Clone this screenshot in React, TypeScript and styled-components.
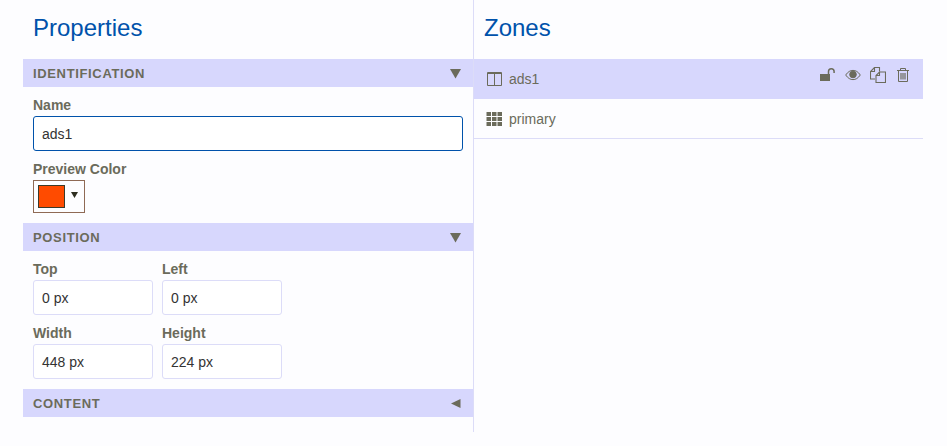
import * as React from 'react'
import styled, { createGlobalStyle } from 'styled-components'

const ink = '#6b6b5b'
const band = '#d7d7fd'
const line = '#dcdcf8'
const paper = '#fdfdff'

const GlobalStyle = createGlobalStyle`
    html, body {
        margin: 0;
        padding: 0;
        background: ${paper};
    }
    body {
        font-family: "Liberation Sans", Arial, sans-serif;
        font-size: 14px;
    }
`

const Page = styled.div`
    display: flex;
    width: 947px;
    height: 446px;
    padding-left: 23px;
    box-sizing: border-box;
    align-items: flex-start;
    overflow: hidden;
`

const PropertiesPanel = styled.section`
    width: 451px;
    height: 432px;
    box-sizing: border-box;
    border-right: 1px solid ${line};
`

const ZonesPanel = styled.section`
    width: 449px;
`

const Title = styled.h1`
    margin: 0;
    height: 59px;
    padding: 14px 0 0 10px;
    box-sizing: border-box;
    font-size: 24px;
    line-height: 28px;
    font-weight: 400;
    color: #0052ab;
`

const SectionBar = styled.div`
    display: flex;
    align-items: center;
    justify-content: space-between;
    height: 28px;
    padding: 0 12px 0 10px;
    background: ${band};
    color: ${ink};
    font-size: 13px;
    font-weight: 700;
    letter-spacing: 0.65px;
    text-transform: uppercase;
`

const SectionBody = styled.div`
    padding: 10px 10px 10px;
`

const Field = styled.div`
    display: flex;
    flex-direction: column;
    margin-bottom: 10px;

    &:last-child {
        margin-bottom: 0;
    }
`

const Label = styled.label`
    height: 19px;
    line-height: 17px;
    font-size: 14px;
    font-weight: 700;
    color: ${ink};
`

const TextInput = styled.div<{ $focused?: boolean; $small?: boolean }>`
    display: flex;
    align-items: center;
    width: ${({ $small }) => ($small ? '120px' : '430px')};
    height: 35px;
    padding-left: 8px;
    box-sizing: border-box;
    background: #fff;
    border: 1px solid ${({ $focused }) => ($focused ? '#0052ab' : line)};
    border-radius: 3px;
    font-size: 14px;
    color: #333;
`

const FieldRow = styled.div`
    display: flex;
    gap: 9px;
    margin-bottom: 10px;

    &:last-child {
        margin-bottom: 0;
    }

    ${Field} {
        margin-bottom: 0;
    }
`

const ColorPicker = styled.div`
    display: flex;
    align-items: center;
    gap: 6px;
    width: 52px;
    height: 33px;
    padding-left: 4px;
    box-sizing: border-box;
    border: 1px solid #8f6a55;
`

const ColorSwatch = styled.span`
    display: block;
    width: 27px;
    height: 23px;
    box-sizing: border-box;
    background: #ff4b00;
    border: 1px solid #3a3a2a;
`

const PickerArrow = styled.svg`
    width: 7px;
    height: 7px;
    margin-top: -4px;
    fill: #2e2e20;
`

const ZoneRow = styled.div<{ $active?: boolean }>`
    display: flex;
    align-items: center;
    height: 40px;
    padding: 0 12px 0 12px;
    box-sizing: border-box;
    background: ${({ $active }) => ($active ? band : 'transparent')};
    border-bottom: ${({ $active }) => ($active ? 'none' : `1px solid ${line}`)};
    color: ${ink};
    font-size: 14px;
`

const ZoneIcon = styled.svg`
    width: 16px;
    height: 14px;
    margin-right: 7px;
    flex: none;
`

const ZoneActions = styled.div`
    display: flex;
    align-items: center;
    gap: 9px;
    margin-left: auto;
    margin-bottom: 8px;
`

const ActionIcon = styled.svg`
    display: block;
    width: 16px;
    height: 16px;
`

const Caret: React.FC<{ open?: boolean }> = ({ open }) => (
    <svg width="11" height="11" viewBox="0 0 11 11" fill={ink}>
        {open ? <path d="M0 1h11L5.500 10.500z" /> : <path d="M1 5.500 10.500 1v9z" />}
    </svg>
)

const App: React.FC = () => {
    return (
        <>
            <GlobalStyle />
            <Page>
                <PropertiesPanel>
                    <Title>Properties</Title>
                    <SectionBar>
                        Identification
                        <Caret open />
                    </SectionBar>
                    <SectionBody>
                        <Field>
                            <Label>Name</Label>
                            <TextInput $focused>ads1</TextInput>
                        </Field>
                        <Field>
                            <Label>Preview Color</Label>
                            <ColorPicker>
                                <ColorSwatch />
                                <PickerArrow viewBox="0 0 8 8">
                                    <path d="M0 1h8L4 8z" />
                                </PickerArrow>
                            </ColorPicker>
                        </Field>
                    </SectionBody>
                    <SectionBar>
                        Position
                        <Caret open />
                    </SectionBar>
                    <SectionBody>
                        <FieldRow>
                            <Field>
                                <Label>Top</Label>
                                <TextInput $small>0 px</TextInput>
                            </Field>
                            <Field>
                                <Label>Left</Label>
                                <TextInput $small>0 px</TextInput>
                            </Field>
                        </FieldRow>
                        <FieldRow>
                            <Field>
                                <Label>Width</Label>
                                <TextInput $small>448 px</TextInput>
                            </Field>
                            <Field>
                                <Label>Height</Label>
                                <TextInput $small>224 px</TextInput>
                            </Field>
                        </FieldRow>
                    </SectionBody>
                    <SectionBar>
                        Content
                        <Caret />
                    </SectionBar>
                </PropertiesPanel>
                <ZonesPanel>
                    <Title>Zones</Title>
                    <ZoneRow $active>
                        <ZoneIcon viewBox="0 0 16 14" fill="none" stroke={ink}>
                            <path d="M1.500.500h14v13h-14zM8.500.500v13" />
                            <path d="M1.500 1.500h14" />
                        </ZoneIcon>
                        ads1
                        <ZoneActions>
                            <ActionIcon viewBox="0 0 16 16" fill={ink}>
                                <path d="M0 7h10v7H0z" />
                                <path d="M8.500 7V4.500a2.800 2.800 0 0 1 5.600 0V6" fill="none" stroke={ink} strokeWidth="1.500" />
                            </ActionIcon>
                            <ActionIcon viewBox="0 0 16 16" fill="none" stroke={ink}>
                                <path d="M.700 8C3 4.600 5.400 3.400 8 3.400s5 1.200 7.300 4.600c-2.300 3.400-4.700 4.600-7.300 4.600S3 11.400.700 8z" />
                                <circle cx="8" cy="7.500" r="3.300" fill={ink} />
                            </ActionIcon>
                            <ActionIcon viewBox="0 0 16 16" fill="none" stroke={ink} strokeWidth="1.100">
                                <path d="M5 12H.500V4.500L4.500.500H9.500v4" />
                                <path d="M.500 4.500h4V.500" />
                                <path d="M6 15.500V8.500L9.500 5H15.500v10.500z" fill={band} />
                                <path d="M6 8.500h3.500V5" />
                            </ActionIcon>
                            <ActionIcon viewBox="0 0 16 16" fill="none" stroke={ink}>
                                <path d="M2 3.500h12M5.500 3.500V1.500h5v2M3.500 3.500v11h9v-11" />
                                <path d="M6 6v6.500M8 6v6.500M10 6v6.500" strokeWidth="1.200" />
                            </ActionIcon>
                        </ZoneActions>
                    </ZoneRow>
                    <ZoneRow>
                        <ZoneIcon viewBox="0 0 16 14" fill={ink}>
                            <path d="M.500 0H5v4H.500zM6 0h4.500v4H6zM11.500 0H16v4h-4.500zM.500 5H5v4H.500zM6 5h4.500v4H6zM11.500 5H16v4h-4.500zM.500 10H5v4H.500zM6 10h4.500v4H6zM11.500 10H16v4h-4.500z" />
                        </ZoneIcon>
                        primary
                    </ZoneRow>
                </ZonesPanel>
            </Page>
        </>
    )
}

export default App
